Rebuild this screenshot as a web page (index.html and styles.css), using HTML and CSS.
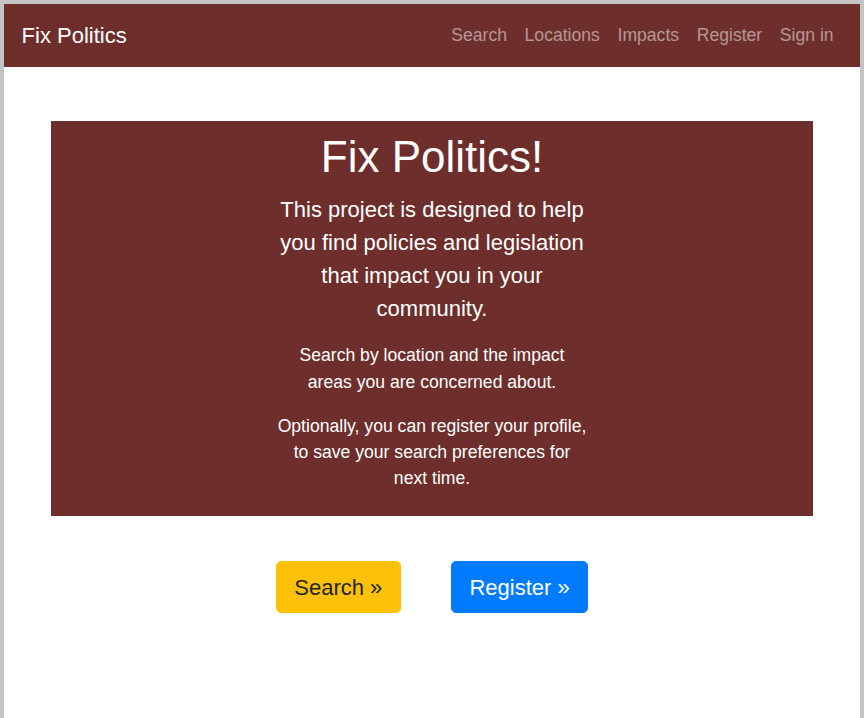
FILE: index.html
```html
<!DOCTYPE html>
<html lang="en">
<head>
<meta charset="utf-8">
<title>Fix Politics</title>
<link rel="stylesheet" href="styles.css">
</head>
<body>
<div class="frame">
  <nav class="navbar">
    <a class="brand" href="#">Fix Politics</a>
    <ul class="nav">
      <li><a class="nav-link" href="#">Search</a></li>
      <li><a class="nav-link" href="#">Locations</a></li>
      <li><a class="nav-link" href="#">Impacts</a></li>
      <li><a class="nav-link" href="#">Register</a></li>
      <li><a class="nav-link" href="#">Sign in</a></li>
    </ul>
  </nav>
  <main class="main">
    <section class="jumbotron">
      <h1 class="title">Fix Politics!</h1>
      <div class="col">
        <p class="lead">This project is designed to help you find policies and legislation that impact you in your community.</p>
        <p class="text">Search by location and the impact areas you are concerned about.</p>
        <p class="text">Optionally, you can register your profile, to save your search preferences for next time.</p>
      </div>
    </section>
    <div class="actions">
      <a class="btn btn-warning" href="#">Search &raquo;</a>
      <a class="btn btn-primary" href="#">Register &raquo;</a>
    </div>
  </main>
</div>
</body>
</html>
```

FILE: styles.css
```css
* { box-sizing: border-box; }
html, body { margin: 0; padding: 0; height: 100%; }
body {
  font-family: "Liberation Sans", Arial, sans-serif;
  background: #ffffff;
  color: #212529;
}
.frame {
  min-height: 100vh;
  border-top: 4px solid #c4c4c4;
  border-left: 4px solid #c4c4c4;
  border-right: 4px solid #c4c4c4;
  background: #ffffff;
}
.navbar {
  height: 63px;
  background: #6e2e2c;
  display: flex;
  align-items: center;
  justify-content: space-between;
  padding: 0 17.6px;
}
.brand {
  color: #ffffff;
  text-decoration: none;
  font-size: 22px;
  line-height: 33px;
}
.nav {
  list-style: none;
  margin: 0;
  padding: 0;
  display: flex;
}
.nav-link {
  display: block;
  padding: 8.8px;
  color: rgba(255, 255, 255, 0.5);
  text-decoration: none;
  font-size: 17.6px;
  line-height: 26.4px;
}
.main {
  padding: 54px 47px 0;
}
.jumbotron {
  background: #6e2e2c;
  color: #ffffff;
  text-align: center;
  padding: 10px 16px 7px;
  height: 395px;
}
.title {
  margin: 0 0 8.8px;
  font-size: 44px;
  line-height: 52.8px;
  font-weight: 400;
}
.col {
  max-width: 311px;
  margin: 0 auto;
}
.lead {
  margin: 0 0 17.6px;
  font-size: 22px;
  line-height: 33px;
  font-weight: 300;
}
.text {
  margin: 0 0 17.6px;
  font-size: 17.6px;
  line-height: 26.4px;
}
.actions {
  display: flex;
  justify-content: center;
  gap: 50px;
  margin-top: 45px;
}
.btn {
  display: inline-block;
  font-size: 22px;
  line-height: 33px;
  padding: 8.5px 17.6px;
  border: 1px solid transparent;
  border-radius: 5px;
  text-decoration: none;
}
.btn-warning {
  background: #ffc107;
  border-color: #ffc107;
  color: #212529;
}
.btn-primary {
  background: #007bff;
  border-color: #007bff;
  color: #ffffff;
}
```
